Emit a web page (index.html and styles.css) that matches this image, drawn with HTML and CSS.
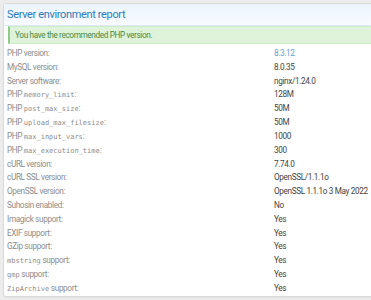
FILE: index.html
```html
<!DOCTYPE html>
<html>
<head>
<meta charset="utf-8">
<link rel="stylesheet" href="styles.css">
</head>
<body>
<div class="page">
<div class="block">
  <h2 class="block-header">Server environment report</h2>
  <div class="block-body">
    <div class="msg-success">You have the recommended PHP version.</div>
    <dl class="pairs">
      <dt>PHP version:</dt><dd><a class="link">8.3.12</a></dd>
      <dt>MySQL version:</dt><dd>8.0.35</dd>
      <dt>Server software:</dt><dd>nginx/1.24.0</dd>
      <dt>PHP <code>memory_limit</code>:</dt><dd>128M</dd>
      <dt>PHP <code>post_max_size</code>:</dt><dd>50M</dd>
      <dt>PHP <code>upload_max_filesize</code>:</dt><dd>50M</dd>
      <dt>PHP <code>max_input_vars</code>:</dt><dd>1000</dd>
      <dt>PHP <code>max_execution_time</code>:</dt><dd>300</dd>
      <dt>cURL version:</dt><dd>7.74.0</dd>
      <dt>cURL SSL version:</dt><dd>OpenSSL/1.1.1o</dd>
      <dt>OpenSSL version:</dt><dd>OpenSSL 1.1.1o 3 May 2022</dd>
      <dt>Suhosin enabled:</dt><dd>No</dd>
      <dt>Imagick support:</dt><dd>Yes</dd>
      <dt>EXIF support:</dt><dd>Yes</dd>
      <dt>GZip support:</dt><dd>Yes</dd>
      <dt><code>mbstring</code> support:</dt><dd>Yes</dd>
      <dt><code>gmp</code> support:</dt><dd>Yes</dd>
      <dt><code>ZipArchive</code> support:</dt><dd>Yes</dd>
    </dl>
  </div>
</div>
</div>
</body>
</html>
```

FILE: styles.css
```css
html, body {
  margin: 0;
  padding: 0;
  background: #ececec;
}
body {
  font-family: Roboto, "Noto Sans", sans-serif;
}
.page {
  width: 371px;
  height: 300px;
  padding: 3px 0 0 3px;
  box-sizing: border-box;
  overflow: hidden;
}
.block {
  width: 380px;
  background: #fff;
  border: 1px solid #dadada;
  border-radius: 3px;
  box-shadow: 0 1px 1px rgba(0,0,0,0.05);
}
.block-header {
  margin: 0;
  font-weight: 400;
  font-size: 11px;
  letter-spacing: -0.35px;
  line-height: 21px;
  color: #2f7bba;
  padding: 0 0 0 3px;
  background: linear-gradient(to bottom, #ebf4fd, #f8fbff);
  border-bottom: 1px solid #dde9f5;
}
.block-body {
  padding: 0 0 0 3px;
}
.msg-success {
  margin: 0 0 3px 1px;
  background: #dff2da;
  border-left: 2px solid #8ecb89;
  border-top: 1px solid #d0ebc9;
  border-bottom: 1px solid #d0ebc9;
  color: #4a8a40;
  font-size: 8.2px;
  letter-spacing: -0.35px;
  line-height: 16px;
  padding: 0 0 0 5px;
}
.pairs {
  margin: 0;
  display: grid;
  grid-template-columns: 267px 1fr;
  grid-auto-rows: 13.82px;
  font-size: 8.2px;
  letter-spacing: -0.35px;
  line-height: 13.82px;
}
.pairs dt {
  color: #8c8c8c;
}
.pairs dd {
  margin: 0;
  color: #444;
  white-space: pre;
}
.pairs code {
  font-family: "DejaVu Sans Mono", monospace;
  font-size: 7px;
  letter-spacing: 0;
}
.link {
  color: #5d9fd3;
}
```
